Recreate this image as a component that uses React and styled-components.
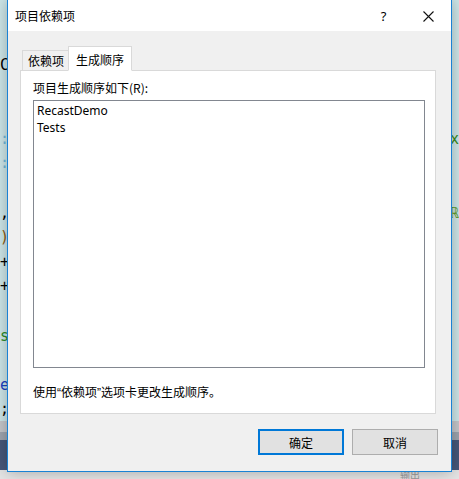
import React from 'react'
import styled, { createGlobalStyle } from 'styled-components'

const GlobalStyle = createGlobalStyle`
  html, body {
    margin: 0;
    padding: 0;
    overflow: hidden;
  }
  body {
    font-family: "Segoe UI", "Noto Sans", "Noto Sans CJK SC", sans-serif;
  }
`

const codeLines = [
  { left: 'C', color: '#000' },
  {},
  {},
  { left: ':', color: '#6fb6d8', right: 'x', rightColor: '#3a8a1a' },
  { left: ':', color: '#6fb6d8' },
  {},
  { left: ',', color: '#000', right: 'ℝ', rightColor: '#5a9a20' },
  { left: ')', color: '#8a5a10' },
  { left: '+', color: '#000' },
  { left: '+', color: '#000' },
  {},
  { left: 's', color: '#2a8a2a' },
  {},
  { left: 'e', color: '#1a40c0' },
  { left: ';', color: '#000' },
]

const App = () => {
  return (
    <>
      <GlobalStyle />
      <Screen>
        <Editor>
          {codeLines.map((l, i) => (
            <CodeLine key={i}>
              <Glyph $color={l.color}>{l.left || ''}</Glyph>
              <Glyph $color={l.rightColor}>{l.right || ''}</Glyph>
            </CodeLine>
          ))}
        </Editor>
        <ToolStrip />
        <ToolStripDark />
        <StatusArea />
        <OutputTab>输出</OutputTab>

        <Dialog>
          <TitleBar>
            <Title>项目依赖项</Title>
            <CaptionButton>?</CaptionButton>
            <CaptionButton>
              <svg width="11" height="11" viewBox="0 0 11 11">
                <path d="M0.5 0.5 L10.5 10.5 M10.5 0.5 L0.5 10.5" stroke="#111" strokeWidth="1.1" fill="none" />
              </svg>
            </CaptionButton>
          </TitleBar>

          <Body>
            <TabStrip>
              <Tab>依赖项</Tab>
              <Tab $active>生成顺序</Tab>
            </TabStrip>
            <Panel>
              <Label>项目生成顺序如下(R):</Label>
              <ListBox>
                <ListItem>RecastDemo</ListItem>
                <ListItem>Tests</ListItem>
              </ListBox>
              <Hint>
                使用<Quote>“</Quote>依赖项<Quote>”</Quote>选项卡更改生成顺序。
              </Hint>
            </Panel>
            <ButtonRow>
              <Button $primary>确定</Button>
              <Button>取消</Button>
            </ButtonRow>
          </Body>
        </Dialog>
      </Screen>
    </>
  )
}

const Screen = styled.div`
  position: relative;
  width: 459px;
  height: 479px;
  display: flex;
  flex-direction: column;
  background: #e4e4e4;
  overflow: hidden;
`

const Editor = styled.div`
  height: 421px;
  background: #cde6e8;
  padding-top: 53px;
  box-sizing: border-box;
  font-family: Consolas, "DejaVu Sans Mono", monospace;
  font-size: 15px;
`

const CodeLine = styled.div`
  height: 24.6px;
  line-height: 24.6px;
  display: flex;
  justify-content: space-between;
  padding: 0 1px 0 0;
`

const Glyph = styled.span`
  color: ${p => p.$color || '#000'};
  width: 8px;
`

const ToolStrip = styled.div`
  height: 11px;
  background: #c4c6ca;
`

const ToolStripDark = styled.div`
  height: 8px;
  background: #9ea4ae;
`

const StatusArea = styled.div`
  height: 31px;
  background: #46577a;
`

const OutputTab = styled.div`
  flex: 1;
  padding-left: 400px;
  font-family: "Noto Sans CJK SC", sans-serif;
  font-size: 10px;
  line-height: 9px;
  color: #9a9a9a;
`

const Dialog = styled.div`
  position: absolute;
  left: 7px;
  top: -1px;
  width: 445px;
  height: 473px;
  box-sizing: border-box;
  border: 1px solid #1a82d4;
  background: #f0f0f0;
  display: flex;
  flex-direction: column;
  box-shadow: 0 0 14px rgba(0, 0, 0, 0.28);
  font-family: "Microsoft YaHei UI", "Noto Sans CJK SC", sans-serif;
  font-size: 12px;
  color: #000;
`

const TitleBar = styled.div`
  height: 31px;
  background: #fff;
  display: flex;
  align-items: center;
  padding-left: 7px;
`

const Title = styled.div`
  flex: 1;
  font-size: 12px;
  line-height: 16px;
  padding-top: 1px;
`

const CaptionButton = styled.div`
  width: 45px;
  height: 31px;
  display: flex;
  align-items: center;
  justify-content: center;
  font-family: "Segoe UI", "Noto Sans", sans-serif;
  font-size: 13px;
  padding-top: 1px;
  box-sizing: border-box;
`

const Body = styled.div`
  flex: 1;
  padding: 15px 15px 0 12px;
  display: flex;
  flex-direction: column;
`

const TabStrip = styled.div`
  display: flex;
  align-items: flex-end;
  padding-left: 2px;
  height: 25px;
  position: relative;
  z-index: 1;
  margin-bottom: -1px;
`

const Tab = styled.div`
  box-sizing: border-box;
  height: ${p => (p.$active ? '25px' : '21px')};
  padding: ${p => (p.$active ? '2px 7px 0 7px' : '1px 4px 0 5px')};
  background: ${p => (p.$active ? '#fff' : '#f0f0f0')};
  border: 1px solid #d9d9d9;
  border-bottom: ${p => (p.$active ? '1px solid #fff' : '1px solid #d9d9d9')};
  margin-left: ${p => (p.$active ? '-1px' : '0')};
  line-height: 17px;
  display: flex;
  align-items: ${p => (p.$active ? 'center' : 'flex-start')};
  white-space: nowrap;
`

const Panel = styled.div`
  box-sizing: border-box;
  width: 416px;
  height: 344px;
  background: #fff;
  border: 1px solid #d9d9d9;
  padding: 8px 11px 0 12px;
  display: flex;
  flex-direction: column;
`

const Label = styled.div`
  line-height: 17px;
  margin-bottom: 4px;
`

const ListBox = styled.div`
  box-sizing: border-box;
  width: 392px;
  height: 268px;
  border: 1px solid #828790;
  padding: 1px 3px;
`

const ListItem = styled.div`
  font-family: "Segoe UI", "Noto Sans", sans-serif;
  font-size: 12px;
  line-height: 17px;
`

const Hint = styled.div`
  margin-top: 15px;
  line-height: 17px;
`

const Quote = styled.span`
  font-family: "Liberation Sans", sans-serif;
`

const ButtonRow = styled.div`
  display: flex;
  justify-content: flex-end;
  gap: 8px;
  margin-top: 15px;
  margin-right: -2px;
`

const Button = styled.div`
  box-sizing: border-box;
  width: 86px;
  height: 26px;
  background: #e1e1e1;
  border: ${p => (p.$primary ? '2px solid #0078d7' : '1px solid #adadad')};
  display: flex;
  align-items: center;
  justify-content: center;
`

export default App
